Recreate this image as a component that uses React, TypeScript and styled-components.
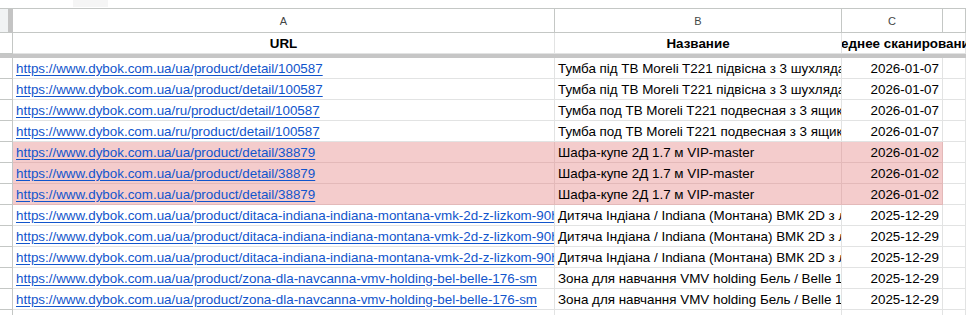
import React from "react";
import styled, { createGlobalStyle } from "styled-components";

const GlobalStyle = createGlobalStyle`
  html, body {
    margin: 0;
    padding: 0;
    background: #ffffff;
    overflow: hidden;
  }
  body {
    font-family: "Liberation Sans", Arial, sans-serif;
  }
`;

const COLUMNS = "13px 542px 287px 101px 1fr";
const GRID = "#e2e3e3";
const HEAD_LINE = "#c4c7c5";
const PINK = "#f4cccc";
const PINK_LINE = "#e3b9b9";

interface Row {
  url: string;
  name: string;
  date: string;
  marked?: boolean;
}

const rows: Row[] = [
  {
    url: "https://www.dybok.com.ua/ua/product/detail/100587",
    name: "Тумба під ТВ Moreli T221 підвісна з 3 шухлядами",
    date: "2026-01-07",
  },
  {
    url: "https://www.dybok.com.ua/ua/product/detail/100587",
    name: "Тумба під ТВ Moreli T221 підвісна з 3 шухлядами",
    date: "2026-01-07",
  },
  {
    url: "https://www.dybok.com.ua/ru/product/detail/100587",
    name: "Тумба под ТВ Moreli T221 подвесная з 3 ящиками",
    date: "2026-01-07",
  },
  {
    url: "https://www.dybok.com.ua/ru/product/detail/100587",
    name: "Тумба под ТВ Moreli T221 подвесная з 3 ящиками",
    date: "2026-01-07",
  },
  {
    url: "https://www.dybok.com.ua/ua/product/detail/38879",
    name: "Шафа-купе 2Д 1.7 м VIP-master",
    date: "2026-01-02",
    marked: true,
  },
  {
    url: "https://www.dybok.com.ua/ua/product/detail/38879",
    name: "Шафа-купе 2Д 1.7 м VIP-master",
    date: "2026-01-02",
    marked: true,
  },
  {
    url: "https://www.dybok.com.ua/ua/product/detail/38879",
    name: "Шафа-купе 2Д 1.7 м VIP-master",
    date: "2026-01-02",
    marked: true,
  },
  {
    url: "https://www.dybok.com.ua/ua/product/ditaca-indiana-indiana-montana-vmk-2d-z-lizkom-90h200",
    name: "Дитяча Індіана / Indiana (Монтана) ВМК 2D з ліжком 90х200",
    date: "2025-12-29",
  },
  {
    url: "https://www.dybok.com.ua/ua/product/ditaca-indiana-indiana-montana-vmk-2d-z-lizkom-90h200",
    name: "Дитяча Індіана / Indiana (Монтана) ВМК 2D з ліжком 90х200",
    date: "2025-12-29",
  },
  {
    url: "https://www.dybok.com.ua/ua/product/ditaca-indiana-indiana-montana-vmk-2d-z-lizkom-90h200",
    name: "Дитяча Індіана / Indiana (Монтана) ВМК 2D з ліжком 90х200",
    date: "2025-12-29",
  },
  {
    url: "https://www.dybok.com.ua/ua/product/zona-dla-navcanna-vmv-holding-bel-belle-176-sm",
    name: "Зона для навчання VMV holding Бель / Belle 176 см",
    date: "2025-12-29",
  },
  {
    url: "https://www.dybok.com.ua/ua/product/zona-dla-navcanna-vmv-holding-bel-belle-176-sm",
    name: "Зона для навчання VMV holding Бель / Belle 176 см",
    date: "2025-12-29",
  },
];

export default function App() {
  return (
    <>
      <GlobalStyle />
      <Sheet>
        <TopStrip>
          <TabStub />
        </TopStrip>

        <LetterRow>
          <Corner />
          <Letter>A</Letter>
          <Letter>B</Letter>
          <Letter>C</Letter>
          <Letter />
        </LetterRow>

        <GridRow $height={20}>
          <RowHead />
          <Cell $align="center" $bold>
            URL
          </Cell>
          <Cell $align="center" $bold>
            Название
          </Cell>
          <SpillCell>
            <span>Последнее сканирование</span>
          </SpillCell>
          <Cell />
        </GridRow>
        <FrozenBar />

        {rows.map((row, i) => (
          <GridRow key={i} $height={20}>
            <RowHead />
            <Cell $marked={row.marked}>
              <Link href="#">{row.url}</Link>
            </Cell>
            <Cell $marked={row.marked}>{row.name}</Cell>
            <Cell $marked={row.marked} $align="right">
              {row.date}
            </Cell>
            <Cell />
          </GridRow>
        ))}

        <GridRow $height={20}>
          <RowHead />
          <Cell />
          <Cell />
          <Cell />
          <Cell />
        </GridRow>
      </Sheet>
    </>
  );
}

const Sheet = styled.div`
  width: 966px;
  height: 315px;
  overflow: hidden;
  background: #ffffff;
  font-size: 13.4px;
  color: #000000;
`;

const TopStrip = styled.div`
  height: 8px;
  border-bottom: 1px solid ${HEAD_LINE};
  display: flex;
  padding-left: 73px;
`;

const TabStub = styled.div`
  width: 35px;
  height: 7px;
  background: #f5f5f5;
`;

const LetterRow = styled.div`
  display: grid;
  grid-template-columns: ${COLUMNS};
  height: 24px;
`;

const Corner = styled.div`
  background: #f1f3f4;
  border-right: 5px solid #c4c4c4;
  border-bottom: 1px solid ${HEAD_LINE};
  box-sizing: border-box;
  margin-left: -5px;
  width: 18px;
`;

const Letter = styled.div`
  display: flex;
  align-items: center;
  justify-content: center;
  border-right: 1px solid ${HEAD_LINE};
  border-bottom: 1px solid ${HEAD_LINE};
  font-size: 11px;
  color: #444746;
`;

const GridRow = styled.div<{ $height: number }>`
  display: grid;
  grid-template-columns: ${COLUMNS};
  grid-auto-rows: ${(p) => p.$height + 1}px;
`;

const RowHead = styled.div`
  border-right: 1px solid ${HEAD_LINE};
  border-bottom: 1px solid ${HEAD_LINE};
`;

const Cell = styled.div<{
  $align?: "left" | "center" | "right";
  $bold?: boolean;
  $marked?: boolean;
}>`
  display: flex;
  align-items: center;
  justify-content: ${(p) =>
    p.$align === "center"
      ? "center"
      : p.$align === "right"
      ? "flex-end"
      : "flex-start"};
  padding: 0 3px;
  overflow: hidden;
  white-space: nowrap;
  min-width: 0;
  font-weight: ${(p) => (p.$bold ? 700 : 400)};
  background: ${(p) => (p.$marked ? PINK : "transparent")};
  border-right: 1px solid ${(p) => (p.$marked ? PINK_LINE : GRID)};
  border-bottom: 1px solid ${(p) => (p.$marked ? PINK_LINE : GRID)};
`;

const SpillCell = styled.div`
  display: flex;
  align-items: center;
  justify-content: center;
  white-space: nowrap;
  min-width: 0;
  font-weight: 700;
  border-bottom: 1px solid ${GRID};
  clip-path: inset(0 -300px 0 0);
`;

const FrozenBar = styled.div`
  height: 4px;
  background: #c6c6c6;
`;

const Link = styled.a`
  color: #1155cc;
  text-decoration: underline;
  text-underline-offset: 2px;
`;
